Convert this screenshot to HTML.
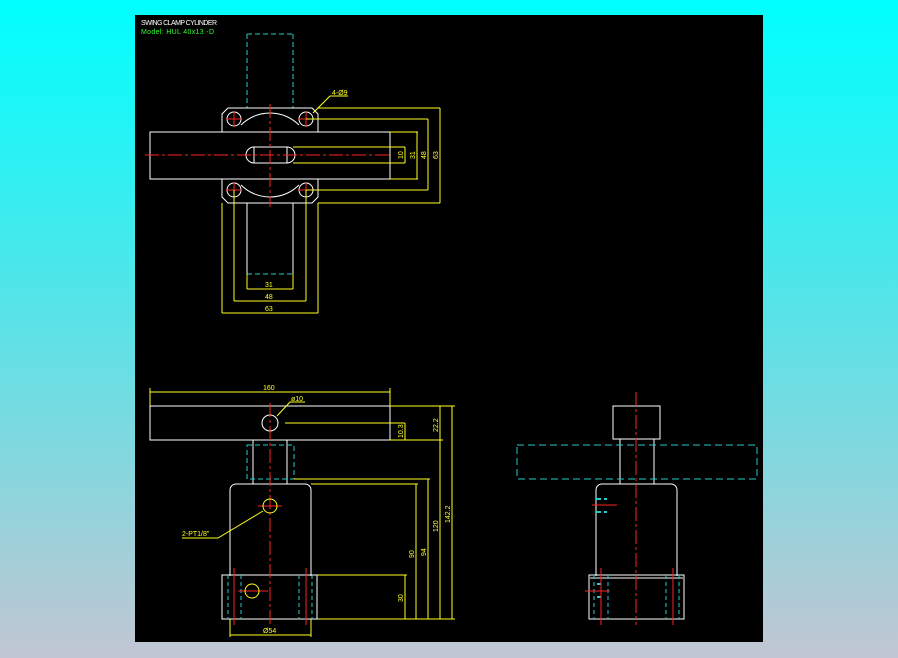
<!DOCTYPE html>
<html><head><meta charset="utf-8"><style>
html,body{margin:0;padding:0;width:898px;height:658px;overflow:hidden}
body{background:linear-gradient(to bottom,#00ffff 0%,#5ce2e6 50%,#c2c6d2 100%)}
svg{position:absolute;left:0;top:0}
text{font-family:"Liberation Sans",sans-serif}
</style></head><body>
<svg width="898" height="658" viewBox="0 0 898 658">
<rect x="135" y="15" width="628" height="627" fill="#000"/>
<text x="141" y="25" font-size="7" fill="#fff" textLength="76">SWING CLAMP CYLINDER</text>
<text x="141" y="34" font-size="7" fill="#3f3" textLength="73">Model: HUL 40x13 -D</text>

<g fill="none" stroke-width="1">
<g stroke="#2cc" stroke-dasharray="5,3">
<line x1="247" y1="34" x2="293" y2="34"/>
<line x1="247" y1="34" x2="247" y2="108"/>
<line x1="293" y1="34" x2="293" y2="108"/>
<line x1="247" y1="274" x2="293" y2="274"/>
</g>
<g stroke="#fff">
<path d="M228 108 L312 108 L318 114 L318 132 M222 132 L222 114 L228 108"/>
<path d="M222 179 L222 197 L228 203 L312 203 L318 197 L318 179"/>
<rect x="150" y="132" width="240" height="47"/>
<circle cx="234" cy="119" r="7"/><circle cx="306" cy="119" r="7"/>
<circle cx="234" cy="190" r="7"/><circle cx="306" cy="190" r="7"/>
<path d="M241 125 A41 41 0 0 1 299 125"/>
<path d="M241 185 A41 41 0 0 0 299 185"/>
<path d="M254 147 L287 147 A8 8 0 0 1 287 163 L254 163 A8 8 0 0 1 254 147 Z"/>
<line x1="254" y1="147" x2="254" y2="163"/><line x1="287" y1="147" x2="287" y2="163"/>
<line x1="247" y1="203" x2="247" y2="274"/><line x1="293" y1="203" x2="293" y2="274"/>
</g>
<g stroke="#f22">
<line x1="145" y1="155" x2="392" y2="155" stroke-dasharray="14,3,3,3"/>
<line x1="270" y1="104" x2="270" y2="207" stroke-dasharray="14,3,3,3"/>
<path d="M226 119h16M234 111v16M298 119h16M306 111v16M226 190h16M234 182v16M298 190h16M306 182v16"/>
</g>
<g stroke="#ff2">
<path d="M318 108H440M306 119H428M390 132H418M390 179H418M293 147H405M293 163H405M306 190H428M318 203H440"/>
<path d="M405 147V163M417 132V179M428 119V190M440 108V203"/>
<path d="M222 203V313M234 190V301M247 274V289M293 274V289M306 190V301M318 203V313"/>
<path d="M247 289H293M234 301H306M222 313H318"/>
<path d="M313 113L330 96H348"/>
</g>
<g fill="#ff2" font-size="7">
<text x="332" y="95">4-Ø9</text>
<text x="265" y="287">31</text><text x="265" y="299">48</text><text x="265" y="311">63</text>
<text transform="translate(403 159) rotate(-90)">10</text>
<text transform="translate(415 159) rotate(-90)">31</text>
<text transform="translate(426 159) rotate(-90)">48</text>
<text transform="translate(438 159) rotate(-90)">63</text>
</g>

<g stroke="#fff">
<rect x="150" y="406" width="240" height="34"/>
<rect x="253" y="440" width="34" height="44"/>
<path d="M230 576V490A6 6 0 0 1 236 484H305A6 6 0 0 1 311 490V576"/>
<rect x="222" y="575" width="95" height="44"/>
<circle cx="270" cy="423" r="8"/>
</g>
<rect x="247" y="445" width="47" height="34" stroke="#2cc" stroke-dasharray="5,3"/>
<g stroke="#2cc" stroke-dasharray="4,3"><path d="M228 575V619M241 575V619M299 575V619M312 575V619"/></g>
<g stroke="#f22">
<line x1="270" y1="403" x2="270" y2="625" stroke-dasharray="14,3,3,3"/>
<path d="M234 568V625M306 568V625M238 591H268M258 506H282"/>
</g>
<g stroke="#ff2">
<circle cx="270" cy="506" r="7"/><circle cx="252" cy="591" r="7"/>
<path d="M150 392H390M150 388V406M390 388V406"/>
<path d="M390 406H455M285 423H405M390 440H443M294 479H430M311 484H418M317 575H407M317 619H455"/>
<path d="M405 423V440M405 575V619M416 484V619M428 479V619M440 406V619M452 406V619"/>
<path d="M230 619V637M311 619V637M230 635H311"/>
<path d="M277 416L290 402H305"/>
<path d="M263 511L218 538H182"/>
</g>
<g fill="#ff2" font-size="7">
<text x="263" y="390">160</text>
<text x="291" y="401">ø10</text>
<text x="182" y="536">2-PT1/8"</text>
<text x="263" y="633">Ø54</text>
<text transform="translate(403 438) rotate(-90)">10.3</text>
<text transform="translate(438 432) rotate(-90)">22.2</text>
<text transform="translate(450 523) rotate(-90)">142.2</text>
<text transform="translate(438 532) rotate(-90)">120</text>
<text transform="translate(426 556) rotate(-90)">94</text>
<text transform="translate(414 558) rotate(-90)">90</text>
<text transform="translate(403 602) rotate(-90)">30</text>
</g>

<g stroke="#fff">
<rect x="613" y="406" width="47" height="33"/>
<path d="M620 439V484M654 439V484"/>
<path d="M596 576V490A6 6 0 0 1 602 484H671A6 6 0 0 1 677 490V576"/>
<rect x="589" y="575" width="95" height="44"/>
<line x1="590" y1="578" x2="683" y2="578"/>
</g>
<rect x="517" y="445" width="240" height="34" stroke="#2cc" stroke-dasharray="7,4"/>
<g stroke="#2cc" stroke-dasharray="4,3"><path d="M594 575V619M608 575V619M666 575V619M679 575V619"/></g>
<g stroke="#2cc" stroke-width="2"><path d="M596 499h5M604 499h3M596 512h5M604 512h3M597 584h4M597 597h4"/></g>
<g stroke="#f22">
<line x1="636" y1="392" x2="636" y2="625" stroke-dasharray="14,3,3,3"/>
<path d="M601 568V625M673 568V625M592 505H617M585 591H610"/>
</g>
</g>
</svg>
</body></html>
